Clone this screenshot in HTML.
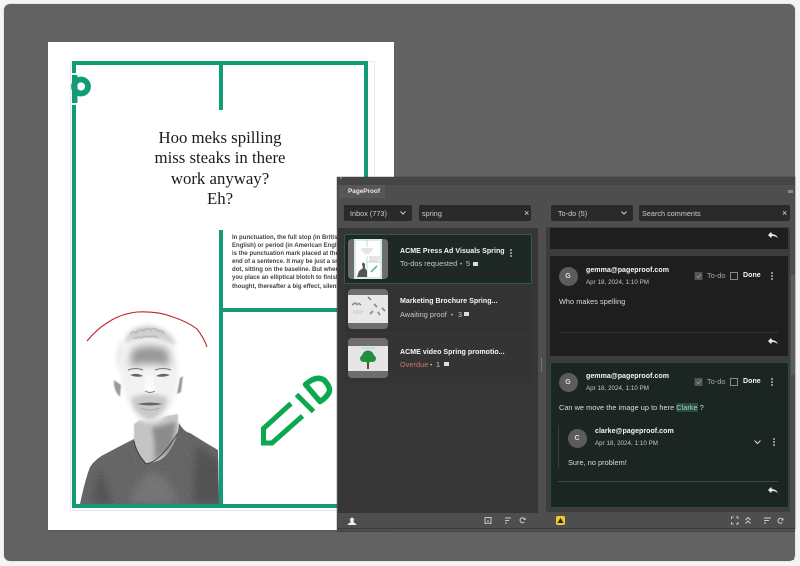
<!DOCTYPE html>
<html><head><meta charset="utf-8"><style>
html,body{margin:0;padding:0;background:#f4f4f4}
#r{position:relative;width:800px;height:566px;overflow:hidden;font-family:"Liberation Sans",sans-serif}
#r div{position:absolute;white-space:nowrap}
.box{background:#2a2a2a;border-radius:2px}
.t{color:#dedede;font-size:7.300px;line-height:10px;letter-spacing:.05px}
.b{color:#f6f6f6;font-size:7.050px;line-height:10px;font-weight:bold;letter-spacing:.03px}
.s{color:#c8c8c8;font-size:6.200px;line-height:9px;letter-spacing:.05px}
.f{font-size:7.200px;color:#cecece}
.h{font-family:"Liberation Serif",serif;font-size:16.800px;line-height:20.300px;color:#1c1c1c;text-align:center;width:200px}
.g{background:#119c75}
.th{background:#6e6e6e;border-radius:4px;width:40px;height:40px;overflow:hidden}
.av{width:19px;height:19px;border-radius:50%;background:#5c5c5c;color:#e0e0e0;font-size:7px;line-height:19px;text-align:center;font-weight:bold}
svg{position:absolute;overflow:visible}
</style></head><body><div id="r">
<div style="left:3px;top:3px;width:791px;height:557px;background:#626262;border:1px solid #e6e6e6;border-radius:7px"></div>
<div style="left:48px;top:42px;width:346px;height:488px;background:#fff;box-shadow:0 1px 1px #555"></div>

<div style="left:70px;top:61px;width:303px;height:448px;border:1px solid #eee8f2"></div>
<div class="g" style="left:72px;top:61px;width:296px;height:4px"></div>
<div class="g" style="left:72px;top:61px;width:4px;height:12px"></div>
<div class="g" style="left:72px;top:105px;width:4px;height:403px"></div>
<div class="g" style="left:364px;top:61px;width:4px;height:447px"></div>
<div class="g" style="left:72px;top:504px;width:296px;height:4px"></div>
<div class="g" style="left:219px;top:65px;width:4px;height:45px"></div>
<div class="g" style="left:219px;top:230px;width:4px;height:275px"></div>
<div class="g" style="left:223px;top:308px;width:145px;height:4px"></div>
<svg style="left:0;top:0" width="800" height="566">
<circle cx="81" cy="86.500" r="7" fill="none" stroke="#119c75" stroke-width="5.800"/>
<rect x="72" y="75" width="5.500" height="28" fill="#119c75"/>
</svg>

<div class="h" style="left:120px;top:128px">Hoo meks spilling<br>miss steaks in there<br>work anyway?<br>Eh?</div>
<div style="left:232px;top:234px;font-size:6.050px;line-height:8.100px;color:#444;font-weight:bold">In punctuation, the full stop (in British<br>English) or period (in American English)<br>is the punctuation mark placed at the<br>end of a sentence. It may be just a small<br>dot, sitting on the baseline. But when<br>you place an elliptical blotch to finish a<br>thought, thereafter a big effect, silence</div>

<svg style="left:0;top:0" width="800" height="566">
<defs>
<filter id="bl" x="-30%" y="-30%" width="160%" height="160%"><feGaussianBlur stdDeviation="2.200"/></filter>
<filter id="bs" x="-30%" y="-30%" width="160%" height="160%"><feGaussianBlur stdDeviation=".6"/></filter>
<filter id="b3" x="-30%" y="-30%" width="160%" height="160%"><feGaussianBlur stdDeviation="4"/></filter>
<filter id="nz" x="0" y="0" width="100%" height="100%"><feTurbulence type="fractalNoise" baseFrequency=".9" numOctaves="2" seed="3"/><feColorMatrix values="0 0 0 0 0 0 0 0 0 0 0 0 0 0 0 0 0 0 1.300 -.45"/><feComposite in2="SourceAlpha" operator="in"/></filter>
<clipPath id="sc"><path d="M80 504Q85 480 90 467Q96 458 107 453Q120 446 134 439Q136 452 146 463Q150 464 160 460Q172 453 178 432L179 423Q184 432 190 433Q204 442 218 450L219 504Z"/></clipPath>
</defs>
<path d="M87 341Q97 329 107 323Q120 314 137 312Q158 311 173 317Q188 322 197 329Q204 338 207 347" fill="none" stroke="#c3202c" stroke-width="1.100"/>
<!-- neck -->
<path d="M134 424L134 452Q140 464 150 464Q165 460 178 448L178 414L140 420Z" fill="#c4c4c4" filter="url(#bs)"/>
<path d="M152 428Q156 446 154 460L172 450L176 422Z" fill="#8c8c8c" filter="url(#bl)"/>
<!-- shirt -->
<path d="M80 504Q85 480 90 467Q96 458 107 453Q120 446 134 439Q136 452 146 463Q150 464 160 460Q172 453 178 432L179 423Q184 432 190 433Q204 442 218 450L219 504Z" fill="#6c6c6c"/>
<g clip-path="url(#sc)"><path d="M92 504L100 466L112 504ZM192 504L196 445L225 465L225 504Z" fill="#585858" filter="url(#b3)"/><path d="M130 504Q136 480 150 472Q168 472 178 504Z" fill="#7c7c7c" filter="url(#b3)"/></g>
<path d="M134 441Q136 453 146 464Q160 462 178 433" fill="none" stroke="#444" stroke-width="1"/>
<path d="M80 504Q85 480 90 467Q96 458 107 453Q120 446 134 439Q136 452 146 463Q150 464 160 460Q172 453 178 432L179 423Q184 432 190 433Q204 442 218 450L219 504Z" fill="#000" filter="url(#nz)" opacity=".25"/>
<!-- face -->
<path d="M120 372Q120 350 130 342Q148 335 170 344Q178 352 178 372Q178 400 164 418Q152 426 140 420Q124 404 120 372Z" fill="#f2f2f2" filter="url(#bl)"/>
<path d="M132 350Q150 342 168 350L170 366Q150 362 130 366Z" fill="#989898" filter="url(#b3)"/>
<path d="M131 398Q150 390 168 398Q166 414 150 420Q134 416 131 398Z" fill="#c8c8c8" filter="url(#bl)"/>
<!-- hair -->
<path d="M124 345Q126 332 136 328Q150 323 162 329Q174 335 176 346Q160 338 148 338Q134 338 124 345Z" fill="#cfcfcf" filter="url(#bl)"/>
<path d="M116 360Q116 345 124 338L124 352L120 372Z" fill="#ececec" filter="url(#bl)"/>
<path d="M130 334q3-4 6-1q3-5 7-2q4-4 8-1q4-3 7 1q5-1 6 3M134 339q4-3 7-1q4-3 8-1q5-2 9 1" fill="none" stroke="#9a9a9a" stroke-width=".8" filter="url(#bs)"/>
<!-- features -->
<path d="M128 370Q136 367 143 370M155 370Q163 367 171 370" stroke="#777" stroke-width="1.100" fill="none"/>
<path d="M130 375Q137 372 143 376Q137 378 130 375ZM156 376Q163 372 170 375Q163 378 156 376Z" fill="#666"/>
<path d="M146 375Q144 385 144 391Q150 396 156 391Q154 383 153 375" fill="#fafafa" filter="url(#bs)"/>
<path d="M145 391Q150 394 155 391" stroke="#777" stroke-width=".9" fill="none"/>
<path d="M137 404Q150 401 163 404Q150 407 137 404Z" fill="#666"/>
<path d="M141 408Q150 412 159 408" stroke="#aaa" stroke-width="1" fill="none"/>
<path d="M114 380Q113 390 120 397L121 385ZM180 378L183 376L181 392L177 394Z" fill="#9a9a9a" filter="url(#bs)"/>
<!-- pencil -->
<g fill="none" stroke="#0ba84f" stroke-width="5">
<path d="M291 403.500L263.500 428.500V443H272L302.500 416"/>
<path d="M296.500 394.500L313.500 411.500"/>
<path d="M305.500 384.500Q316 375 324 380Q331 387 329 392.500Q326 398 320 401.500Z" stroke-linejoin="round" stroke-width="5.500"/>
</g>
</svg>

<!-- panel -->
<div style="left:337px;top:177px;width:458px;height:353px;background:#4e4e4e;box-shadow:0 0 1px #222"></div>
<div style="left:337px;top:177px;width:458px;height:8px;background:#454545"></div>
<div style="left:339px;top:185px;width:46px;height:13px;background:#575757"></div>
<div class="b" style="left:348px;top:186.500px;font-size:6.400px;color:#e8e8e8;letter-spacing:0">PageProof</div>
<div style="left:339px;top:176px;color:#aaa;font-size:6px">×</div>
<div style="left:788px;top:190px;width:5px;height:3px;background:#888"></div>

<div class="box" style="left:344px;top:205px;width:68px;height:16px"></div>
<div class="s f" style="left:350px;top:208.500px">Inbox (773)</div>
<svg style="left:400px;top:211px" width="6" height="4"><path d="M.5 .5L3 3L5.500 .5" stroke="#ccc" fill="none"/></svg>
<div class="box" style="left:419px;top:205px;width:112px;height:16px"></div>
<div class="s f" style="left:422px;top:208.500px">spring</div>
<div class="s" style="left:524px;top:208.500px;font-size:9px;color:#ddd">×</div>
<div class="box" style="left:551px;top:205px;width:82px;height:16px"></div>
<div class="s f" style="left:558px;top:208.500px">To-do (5)</div>
<svg style="left:621px;top:211px" width="6" height="4"><path d="M.5 .5L3 3L5.500 .5" stroke="#ccc" fill="none"/></svg>
<div class="box" style="left:639px;top:205px;width:151px;height:16px"></div>
<div class="s f" style="left:642px;top:208.500px">Search comments</div>
<div class="s" style="left:782px;top:208.500px;font-size:9px;color:#ddd">×</div>

<!-- left list -->
<div style="left:338px;top:228px;width:200px;height:285px;background:#363636"></div>
<div style="left:344px;top:234px;width:186px;height:48px;background:#1e2925;border:1px solid #2e5a4c;border-radius:2px"></div>
<div style="left:345px;top:284px;width:186px;height:48px;background:#333"></div>
<div style="left:345px;top:334px;width:186px;height:48px;background:#343434"></div>

<div class="th" style="left:348px;top:239px">
<div style="left:6px;top:0;width:28px;height:40px;background:#fff"></div>
<svg style="left:6px;top:0" width="28" height="40"><rect x="1" y="1" width="26" height="38" fill="none" stroke="#7cc4ae" stroke-width=".6"/><path d="M13 1V8M13 17V39M13 23H27" stroke="#7cc4ae" stroke-width=".5"/><path d="M7 10H19M8 12H18M10 14H16" stroke="#bbb" stroke-width=".7"/><path d="M15 18H26M15 20H26M15 22H24" stroke="#bbb" stroke-width=".7"/><path d="M3 38L5 32L9 29L8 25Q9 22 11 25L11 29L13 32V38Z" fill="#555"/><path d="M17 33L23 27" stroke="#4ab87a" stroke-width="1.500"/></svg>
</div>
<div class="th" style="left:348px;top:289px">
<div style="left:0;top:6px;width:40px;height:28px;background:#e8e8e8"></div>
<svg style="left:0;top:6px" width="40" height="28"><path d="M4 10l3-2 3 2M10 8l3 2M20 2l3 3M26 9l3 3M34 13l3 3M22 19l3-3M30 17l2 3" stroke="#888" stroke-width="1.600" fill="none"/><path d="M5 16H16M5 18H14" stroke="#ccc"/></svg>
</div>
<div class="th" style="left:348px;top:338px">
<div style="left:0;top:8px;width:40px;height:25px;background:#e6e6e6"></div>
<svg style="left:0;top:8px" width="40" height="25"><rect x="19" y="14" width="2" height="9" fill="#6b4a2a"/><circle cx="20" cy="10.500" r="6" fill="#1f8f3c"/><circle cx="15.500" cy="12.500" r="3.500" fill="#1f8f3c"/><circle cx="24.500" cy="12.500" r="3.500" fill="#1f8f3c"/><path d="M13 2H27" stroke="#bcd0bc"/></svg>
</div>

<div class="b" style="left:400px;top:247px">ACME Press Ad Visuals Spring</div>
<div class="t" style="left:400px;top:259px;color:#c8c8c8">To-dos requested</div>
<div class="t" style="left:460px;top:259px;color:#c8c8c8"><span style="font-size:6px">•</span></div>
<div class="t" style="left:466px;top:259px;color:#c8c8c8">5</div>
<div class="b" style="left:400px;top:297px">Marketing Brochure Spring...</div>
<div class="t" style="left:400px;top:309.500px;color:#c8c8c8">Awaiting proof</div>
<div class="t" style="left:451px;top:309.500px;color:#c8c8c8"><span style="font-size:6px">•</span></div>
<div class="t" style="left:458px;top:309.500px;color:#c8c8c8">3</div>
<div class="b" style="left:400px;top:347.500px">ACME video Spring promotio...</div>
<div class="t" style="left:400px;top:359.500px;color:#c9756c">Overdue</div>
<div class="t" style="left:430px;top:359.500px;color:#c8c8c8"><span style="font-size:6px">•</span></div>
<div class="t" style="left:436px;top:359.500px;color:#c8c8c8">1</div>
<div style="left:473px;top:262px;width:5px;height:4px;background:#ddd"></div>
<div style="left:464px;top:312px;width:5px;height:4px;background:#ddd"></div>
<div style="left:444px;top:362px;width:5px;height:4px;background:#ddd"></div>
<svg style="left:0;top:0" width="800" height="566" fill="#ddd"><circle cx="511" cy="250" r=".9"/><circle cx="511" cy="253" r=".9"/><circle cx="511" cy="256" r=".9"/></svg>
<div style="left:541px;top:358px;width:1px;height:14px;background:#777"></div>

<!-- right list -->
<div style="left:546px;top:227px;width:244px;height:285px;background:#3c3c3c"></div>
<div style="left:550px;top:228px;width:238px;height:21px;background:#1e1e1e"></div>
<div style="left:550px;top:256px;width:238px;height:100px;background:#1e1e1e"></div>
<div style="left:550px;top:362px;width:237px;height:144px;background:#1b2521;border:1px solid #2a4a3e"></div>
<div style="left:791px;top:275px;width:4px;height:100px;background:#5c5c5c"></div>

<div class="av" style="left:558.500px;top:266.500px">G</div>
<div class="b" style="left:586px;top:266px">gemma@pageproof.com</div>
<div class="s" style="left:586px;top:277.500px">Apr 18, 2024, 1:10 PM</div>
<div class="t" style="left:559px;top:297px">Who makes spelling</div>
<div style="left:559px;top:332px;width:219px;height:1px;background:#333"></div>

<div class="av" style="left:558.500px;top:372.500px">G</div>
<div class="b" style="left:586px;top:372px">gemma@pageproof.com</div>
<div class="s" style="left:586px;top:383.500px">Apr 18, 2024, 1:10 PM</div>
<div class="t" style="left:559px;top:403px">Can we move the image up to here <span style="color:#9fdcc0;background:#2a4a3c">Clarke</span> ?</div>
<div style="left:558px;top:425px;width:1px;height:43px;background:#34423c"></div>
<div class="av" style="left:567.500px;top:428.500px">C</div>
<div class="b" style="left:595px;top:427px">clarke@pageproof.com</div>
<div class="s" style="left:595px;top:439px">Apr 18, 2024, 1:10 PM</div>
<div class="t" style="left:568px;top:458px">Sure, no problem!</div>
<div style="left:558px;top:481px;width:220px;height:1px;background:#3a4a44"></div>

<!-- checkboxes, kebabs, reply -->
<svg style="left:0;top:0" width="800" height="566">
<rect x="695" y="272.500" width="7" height="7" fill="#555" stroke="#666" stroke-width=".6"/><path d="M696.500 276l1.700 1.700 3-3.400" stroke="#999" fill="none" stroke-width=".8"/><rect x="730.500" y="272.500" width="7" height="7" fill="none" stroke="#888"/>
<rect x="695" y="378.500" width="7" height="7" fill="#555" stroke="#666" stroke-width=".6"/><path d="M696.500 382l1.700 1.700 3-3.400" stroke="#999" fill="none" stroke-width=".8"/><rect x="730.500" y="378.500" width="7" height="7" fill="none" stroke="#888"/>
<g fill="#ddd"><circle cx="772" cy="273" r=".9"/><circle cx="772" cy="276" r=".9"/><circle cx="772" cy="279" r=".9"/><circle cx="772" cy="379" r=".9"/><circle cx="772" cy="382" r=".9"/><circle cx="772" cy="385" r=".9"/><circle cx="774" cy="439" r=".9"/><circle cx="774" cy="442" r=".9"/><circle cx="774" cy="445" r=".9"/></g>
<path d="M754.500 440.500l3 3 3-3" stroke="#ddd" fill="none" stroke-width="1"/>
<g fill="#e8e8e8"><path d="M768 235l3-3v2l1-2v2q5 .5 6 4.500q-2-2.500-6-2.500v2l-1-2v2z"/><path d="M768 341l3-3v2l1-2v2q5 .5 6 4.500q-2-2.500-6-2.500v2l-1-2v2z"/><path d="M768 490l3-3v2l1-2v2q5 .5 6 4.500q-2-2.500-6-2.500v2l-1-2v2z"/></g>
<path d="M350.500 521a2 2 0 1 1 3 0l.3 1.500l2.500 1.500v1h-8.500v-1l2.500-1.500z" fill="#eee"/>
<path d="M485 517.500h6v6h-2M487 523.500h-2v-6" fill="none" stroke="#ccc"/><path d="M488 520v4" stroke="#ccc"/>
<path d="M505 518h6M505 520.500h4M505 523h2" stroke="#ccc" stroke-width="1"/>
<path d="M525 520a2.500 2.500 0 1 0-.7 2" fill="none" stroke="#ccc"/><path d="M525.500 517.500v2.500h-2.500z" fill="#ccc"/>
<rect x="556" y="516" width="9" height="9" rx="1.500" fill="#f2c81e"/><path d="M560.500 518l3 5h-6z" fill="#222"/>
<path d="M731.500 519v-2h2M736 517h2v2M738 522v2h-2M733.500 524h-2v-2" fill="none" stroke="#ccc"/>
<path d="M745.500 520l2.500-2.500 2.500 2.500M745.500 523.500l2.500-2.500 2.500 2.500" fill="none" stroke="#ccc"/>
<path d="M764 518h7M764 520.500h5M764 523h2" stroke="#ccc"/>
<path d="M783 520.500a2.500 2.500 0 1 0-.7 2" fill="none" stroke="#ccc"/><path d="M783.500 518v2.500h-2.500z" fill="#ccc"/>
</svg>
<div class="t" style="left:707px;top:271px;color:#aaa">To-do</div>
<div class="b" style="left:743px;top:271px">Done</div>
<div class="t" style="left:707px;top:377px;color:#aaa">To-do</div>
<div class="b" style="left:743px;top:377px">Done</div>

<!-- bottom -->
<div style="left:337px;top:528px;width:458px;height:1px;background:#3c3c3c"></div>
<div style="left:337px;top:531px;width:458px;height:1px;background:#444"></div>
<div style="left:394px;top:532px;width:400px;height:28px;background:#626262"></div>
</div></body></html>
